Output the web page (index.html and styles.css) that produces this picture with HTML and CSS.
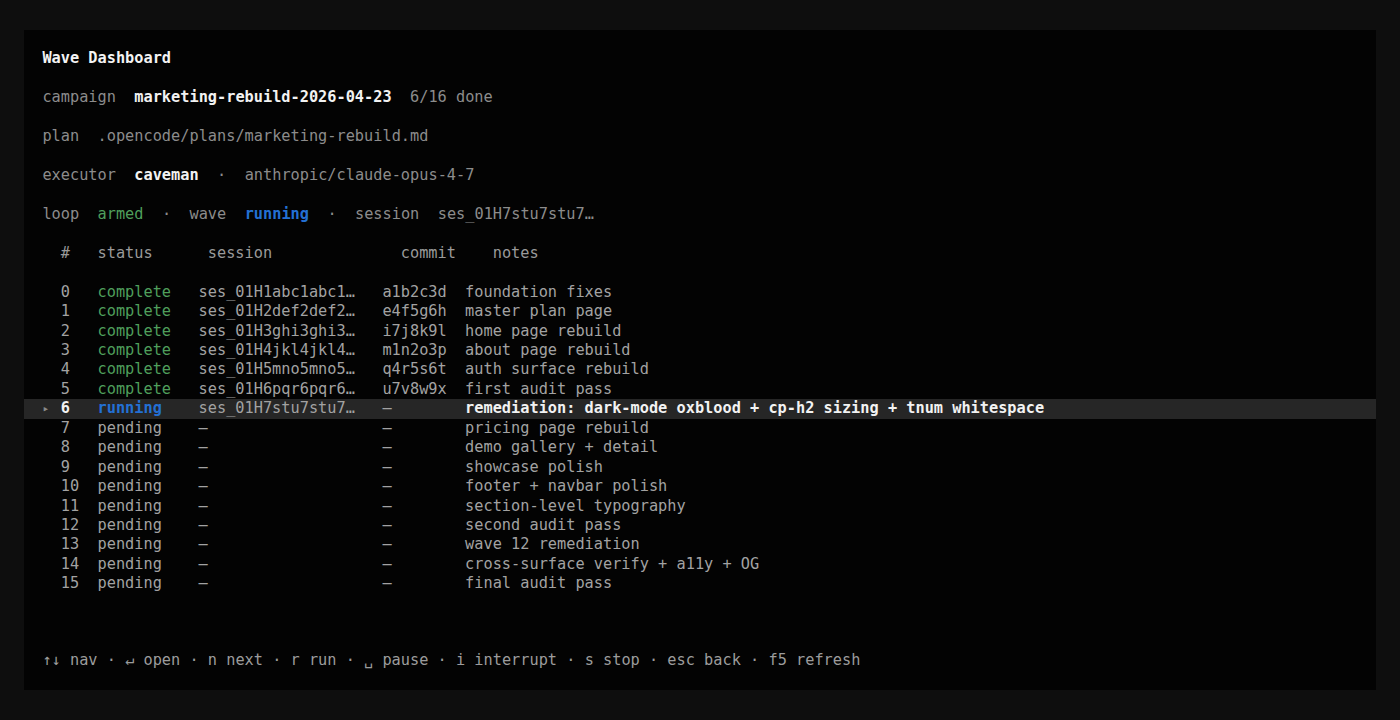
FILE: index.html
```html
<!DOCTYPE html>
<html lang="en">
<head>
<meta charset="utf-8">
<title>Wave Dashboard</title>
<link rel="stylesheet" href="styles.css">
</head>
<body>
<main class="panel">
  <section class="meta">
    <div class="line title">Wave Dashboard</div>
    <div class="line"><span class="label">campaign</span>  <span class="strong">marketing-rebuild-2026-04-23</span>  <span class="label">6/16 done</span></div>
    <div class="line"><span class="label">plan</span>  <span class="label">.opencode/plans/marketing-rebuild.md</span></div>
    <div class="line"><span class="label">executor</span>  <span class="strong">caveman</span>  <span class="label">·</span>  <span class="label">anthropic/claude-opus-4-7</span></div>
    <div class="line"><span class="label">loop</span>  <span class="ok">armed</span>  <span class="label">·</span>  <span class="label">wave</span>  <span class="run">running</span>  <span class="label">·</span>  <span class="label">session</span>  <span class="label">ses_01H7stu7stu7…</span></div>
    <div class="line thead">
      <span></span><span>#</span><span>status</span><span>session</span><span>commit</span><span>notes</span>
    </div>
  </section>

  <section class="table">
    <div class="line row"><span></span><span>0</span><span class="ok">complete</span><span>ses_01H1abc1abc1…</span><span>a1b2c3d</span><span>foundation fixes</span></div>
    <div class="line row"><span></span><span>1</span><span class="ok">complete</span><span>ses_01H2def2def2…</span><span>e4f5g6h</span><span>master plan page</span></div>
    <div class="line row"><span></span><span>2</span><span class="ok">complete</span><span>ses_01H3ghi3ghi3…</span><span>i7j8k9l</span><span>home page rebuild</span></div>
    <div class="line row"><span></span><span>3</span><span class="ok">complete</span><span>ses_01H4jkl4jkl4…</span><span>m1n2o3p</span><span>about page rebuild</span></div>
    <div class="line row"><span></span><span>4</span><span class="ok">complete</span><span>ses_01H5mno5mno5…</span><span>q4r5s6t</span><span>auth surface rebuild</span></div>
    <div class="line row"><span></span><span>5</span><span class="ok">complete</span><span>ses_01H6pqr6pqr6…</span><span>u7v8w9x</span><span>first audit pass</span></div>
    <div class="line row current"><span class="caret">▸</span><span class="strong">6</span><span class="run">running</span><span>ses_01H7stu7stu7…</span><span>—</span><span class="strong">remediation: dark-mode oxblood + cp-h2 sizing + tnum whitespace</span></div>
    <div class="line row"><span></span><span>7</span><span>pending</span><span>—</span><span>—</span><span>pricing page rebuild</span></div>
    <div class="line row"><span></span><span>8</span><span>pending</span><span>—</span><span>—</span><span>demo gallery + detail</span></div>
    <div class="line row"><span></span><span>9</span><span>pending</span><span>—</span><span>—</span><span>showcase polish</span></div>
    <div class="line row"><span></span><span>10</span><span>pending</span><span>—</span><span>—</span><span>footer + navbar polish</span></div>
    <div class="line row"><span></span><span>11</span><span>pending</span><span>—</span><span>—</span><span>section-level typography</span></div>
    <div class="line row"><span></span><span>12</span><span>pending</span><span>—</span><span>—</span><span>second audit pass</span></div>
    <div class="line row"><span></span><span>13</span><span>pending</span><span>—</span><span>—</span><span>wave 12 remediation</span></div>
    <div class="line row"><span></span><span>14</span><span>pending</span><span>—</span><span>—</span><span>cross-surface verify + a11y + OG</span></div>
    <div class="line row"><span></span><span>15</span><span>pending</span><span>—</span><span>—</span><span>final audit pass</span></div>
  </section>

  <footer class="line footer">↑↓ nav · ↵ open · n next · r run · ␣ pause · i interrupt · s stop · esc back · f5 refresh</footer>
</main>
</body>
</html>
```

FILE: styles.css
```css
* {
  box-sizing: border-box;
}

html, body {
  margin: 0;
  padding: 0;
}

body {
  background: #0e0e0e;
  width: 1400px;
  height: 720px;
  padding: 30px 24px;
  font-family: "DejaVu Sans Mono", "Liberation Mono", monospace;
  font-size: 15.28px;
  line-height: 19.44px;
  color: #a6a6a6;
}

.panel {
  background: #030303;
  height: 660px;
  padding: 19.44px 0;
  display: flex;
  flex-direction: column;
}

.line {
  height: 19.44px;
  padding: 0 2ch;
  white-space: pre;
}

.meta {
  display: flex;
  flex-direction: column;
  gap: 19.44px;
  margin-bottom: 19.44px;
}

.title {
  color: #f4f4f4;
  font-weight: bold;
}

.label {
  color: #8c8c8c;
}

.strong {
  color: #f2f2f2;
  font-weight: bold;
}

.ok {
  color: #4f9f5c;
}

.run {
  color: #2370d4;
  font-weight: bold;
}

.thead {
  display: grid;
  grid-template-columns: 2ch 4ch 12ch 21ch 10ch 1fr;
  color: #9a9a9a;
}

.table {
  display: flex;
  flex-direction: column;
}

.row {
  display: grid;
  grid-template-columns: 2ch 4ch 11ch 20ch 9ch 1fr;
  color: #a2a2a2;
}

.row.current {
  background: #262626;
}

.caret {
  color: #8a8a8a;
  font-size: 11px;
}

.footer {
  margin-top: auto;
  color: #9c9c9c;
}
```
